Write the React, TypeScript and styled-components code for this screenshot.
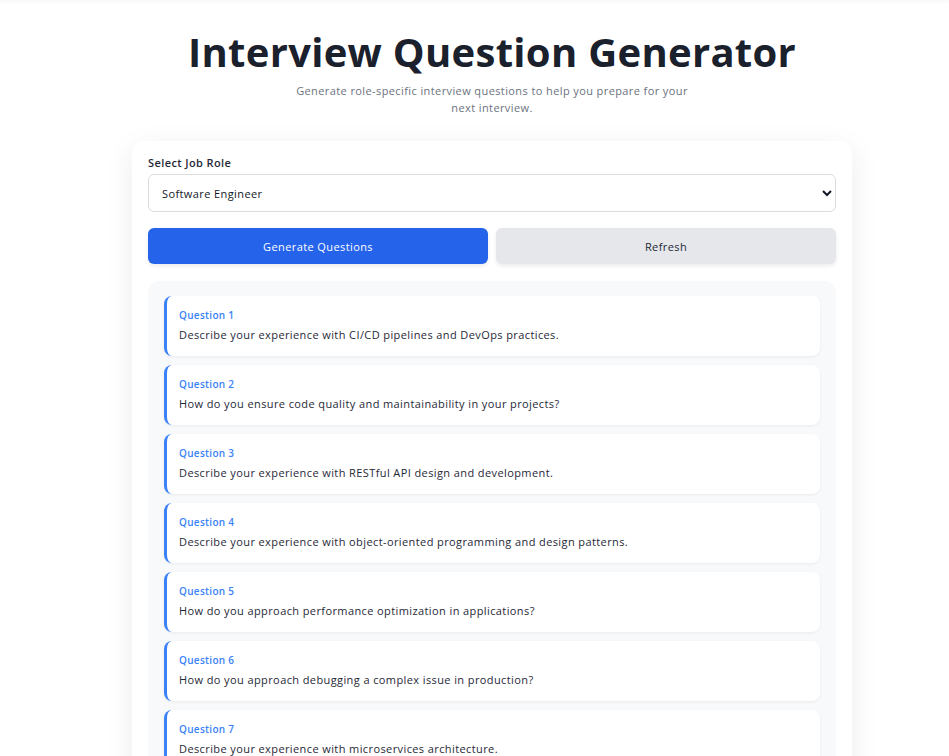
import React, { useState } from 'react';
import styled, { createGlobalStyle } from 'styled-components';

const GlobalStyle = createGlobalStyle`
    html, body {
        margin: 0;
        padding: 0;
        background: #ffffff;
    }
    body {
        font-family: 'Open Sans', 'Noto Sans', sans-serif;
        color: #1f2937;
        overflow: hidden;
    }
    * {
        box-sizing: border-box;
    }
`;

const questions = [
    'Describe your experience with CI/CD pipelines and DevOps practices.',
    'How do you ensure code quality and maintainability in your projects?',
    'Describe your experience with RESTful API design and development.',
    'Describe your experience with object-oriented programming and design patterns.',
    'How do you approach performance optimization in applications?',
    'How do you approach debugging a complex issue in production?',
    'Describe your experience with microservices architecture.',
];

const roles = ['Software Engineer', 'Product Manager', 'Data Scientist', 'UX Designer'];

const App: React.FC = () => {
    const [role, setRole] = useState(roles[0]);

    return (
        <>
            <GlobalStyle />
            <TopShade />
            <Page>
                <Wrapper>
                    <Title>Interview Question Generator</Title>
                    <Subtitle>
                        Generate role-specific interview questions to help you prepare for your next interview.
                    </Subtitle>
                    <Card>
                        <Label htmlFor="role">Select Job Role</Label>
                        <Select id="role" value={role} onChange={(e) => setRole(e.target.value)}>
                            {roles.map((r) => (
                                <option key={r}>{r}</option>
                            ))}
                        </Select>
                        <Actions>
                            <Button $primary>Generate Questions</Button>
                            <Button>Refresh</Button>
                        </Actions>
                        <QuestionList>
                            {questions.map((q, i) => (
                                <QuestionCard key={i}>
                                    <QuestionLabel>Question {i + 1}</QuestionLabel>
                                    <QuestionText>{q}</QuestionText>
                                </QuestionCard>
                            ))}
                        </QuestionList>
                    </Card>
                </Wrapper>
            </Page>
        </>
    );
};

const TopShade = styled.div`
    height: 0;
    box-shadow: 0 0 5px 1px rgba(0, 0, 0, 0.08);
`;

const Page = styled.div`
    display: flex;
    justify-content: center;
    padding: 24px 0 40px 35px;
`;

const Wrapper = styled.div`
    width: 720px;
    display: flex;
    flex-direction: column;
    align-items: center;
`;

const Title = styled.h1`
    margin: 0;
    font-size: 40px;
    line-height: 56px;
    font-weight: 700;
    color: #1a202c;
    letter-spacing: 0.3px;
`;

const Subtitle = styled.p`
    margin: 2px 0 25px;
    max-width: 400px;
    text-align: center;
    font-size: 11px;
    line-height: 17px;
    letter-spacing: 0.4px;
    color: #6b7280;
`;

const Card = styled.div`
    width: 100%;
    background: #ffffff;
    border-radius: 12px;
    padding: 14px 16px 16px;
    box-shadow: 0 8px 30px rgba(0, 0, 0, 0.08);
    display: flex;
    flex-direction: column;
`;

const Label = styled.label`
    font-size: 11px;
    font-weight: 600;
    letter-spacing: 0.4px;
    color: #1f2937;
    margin-bottom: 4px;
`;

const Select = styled.select`
    height: 38px;
    width: 100%;
    border: 1px solid #dcdcdc;
    border-radius: 6px;
    padding: 0 9px;
    font-family: inherit;
    font-size: 11px;
    letter-spacing: 0.4px;
    color: #111827;
    background: #ffffff;
`;

const Actions = styled.div`
    display: grid;
    grid-template-columns: 1fr 1fr;
    gap: 8px;
    margin-top: 16px;
`;

const Button = styled.button<{ $primary?: boolean }>`
    height: 36px;
    border: none;
    border-radius: 6px;
    font-family: inherit;
    font-size: 11px;
    font-weight: 500;
    letter-spacing: 0.4px;
    cursor: pointer;
    background: ${(p) => (p.$primary ? '#2563eb' : '#e5e7eb')};
    color: ${(p) => (p.$primary ? '#ffffff' : '#1f2937')};
    box-shadow: 0 2px 4px rgba(0, 0, 0, 0.08);
`;

const QuestionList = styled.div`
    margin-top: 17px;
    background: #f8f9fb;
    border-radius: 12px;
    padding: 15px 16px 16px;
    display: flex;
    flex-direction: column;
    gap: 9px;
`;

const QuestionCard = styled.div`
    background: #ffffff;
    border-left: 3px solid #3b82f6;
    border-radius: 8px;
    padding: 12px 12px 13px;
    box-shadow: 0 1px 3px rgba(0, 0, 0, 0.06);
`;

const QuestionLabel = styled.div`
    font-size: 10px;
    font-weight: 600;
    letter-spacing: 0.3px;
    color: #3b82f6;
    line-height: 14px;
`;

const QuestionText = styled.div`
    margin-top: 5px;
    font-size: 11px;
    line-height: 16px;
    letter-spacing: 0.4px;
    color: #1f2937;
`;

export default App;
